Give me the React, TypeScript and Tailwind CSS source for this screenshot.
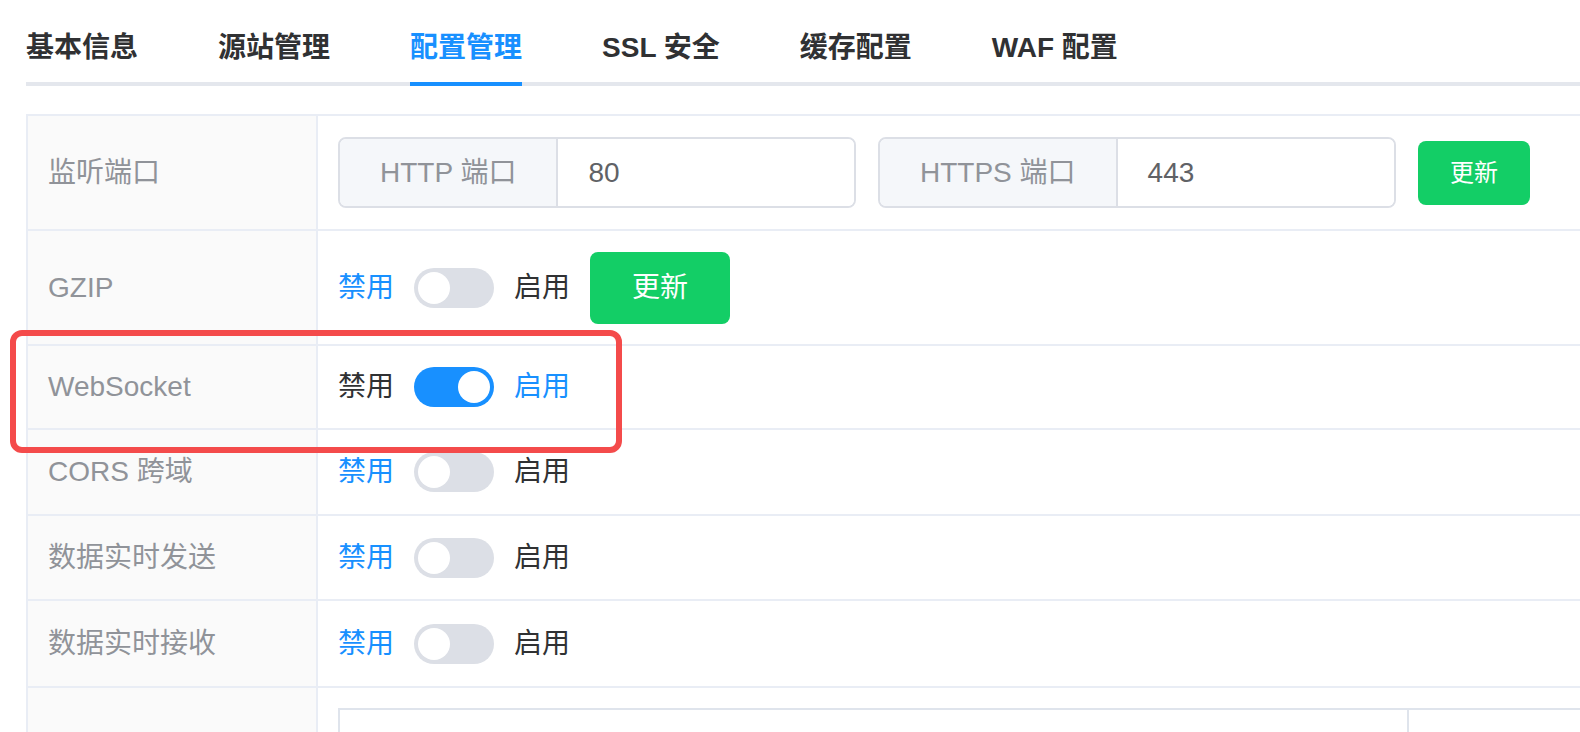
import React from "react";

const FONT = { fontFamily: '"Liberation Sans", "Noto Sans CJK SC", sans-serif' };

function Switch({ on }: { on: boolean }) {
  return (
    <div
      className={`relative h-[40px] w-[80px] shrink-0 rounded-full ${on ? "bg-[#1890ff]" : "bg-[#dcdfe6]"}`}
    >
      <div
        className={`absolute top-[4px] h-[32px] w-[32px] rounded-full bg-white ${on ? "left-[44px]" : "left-[4px]"}`}
      />
    </div>
  );
}

function Toggle({ on }: { on: boolean }) {
  return (
    <div className="flex items-center gap-[20px] text-[28px] leading-[40px]">
      <span className={on ? "text-[#303133]" : "text-[#1890ff]"}>禁用</span>
      <Switch on={on} />
      <span className={on ? "text-[#1890ff]" : "text-[#303133]"}>启用</span>
    </div>
  );
}

function Row({
  label,
  h,
  children,
}: {
  label: string;
  h: string;
  children?: React.ReactNode;
}) {
  return (
    <div className={`flex border-b-2 border-[#e9edf5] ${h}`}>
      <div className="flex w-[290px] shrink-0 items-center border-r-2 border-[#e9edf5] bg-[#fafafa] pl-[20px] text-[28px] text-[#909399]">
        {label}
      </div>
      <div className="flex flex-1 items-center pl-[20px]">{children}</div>
    </div>
  );
}

function InputGroup({ prepend, value }: { prepend: string; value: string }) {
  return (
    <div className="flex h-[71px] w-[518px] shrink-0 overflow-hidden rounded-[8px] border-2 border-[#dcdfe6]">
      <div className="flex items-center border-r-2 border-[#dcdfe6] bg-[#f5f7fa] px-[40px] text-[28px] text-[#909399]">
        {prepend}
      </div>
      <div className="flex flex-1 items-center bg-white pl-[30px] text-[28px] text-[#606266]">{value}</div>
    </div>
  );
}

export default function App() {
  const tabs = ["基本信息", "源站管理", "配置管理", "SSL 安全", "缓存配置", "WAF 配置"];
  return (
    <div className="relative h-[732px] w-[1580px] overflow-hidden bg-white" style={FONT}>
      {/* Tabs */}
      <div className="ml-[26px] flex pt-[2px] shadow-[inset_0_-4px_0_#e4e7ed]">
        {tabs.map((t, i) => (
          <div
            key={t}
            className={`flex h-[84px] items-center pt-[8px] ${i === 0 ? "pr-[40px]" : "px-[40px]"}`}
          >
            <div
              className={`flex h-full items-center border-b-4 text-[28px] font-semibold ${
                i === 2 ? "border-[#1890ff] text-[#1890ff]" : "border-transparent text-[#303133]"
              }`}
            >
              <span className="pt-[4px]">{t}</span>
            </div>
          </div>
        ))}
      </div>

      {/* Table */}
      <div className="ml-[26px] mt-[28px] w-[1600px] border-l-2 border-t-2 border-[#e9edf5]">
        <Row label="监听端口" h="h-[115px]">
          <div className="flex items-center gap-[22px]">
            <InputGroup prepend="HTTP 端口" value="80" />
            <InputGroup prepend="HTTPS 端口" value="443" />
            <button className="flex h-[64px] w-[112px] items-center justify-center rounded-[8px] bg-[#13ce66] text-[24px] text-white">
              更新
            </button>
          </div>
        </Row>
        <Row label="GZIP" h="h-[115px]">
          <div className="flex items-center gap-[20px]">
            <Toggle on={false} />
            <button className="flex h-[72px] w-[140px] items-center justify-center rounded-[8px] bg-[#13ce66] text-[28px] text-white">
              更新
            </button>
          </div>
        </Row>
        <Row label="WebSocket" h="h-[84px]">
          <Toggle on={true} />
        </Row>
        <Row label="CORS 跨域" h="h-[86px]">
          <Toggle on={false} />
        </Row>
        <Row label="数据实时发送" h="h-[85px]">
          <Toggle on={false} />
        </Row>
        <Row label="数据实时接收" h="h-[87px]">
          <Toggle on={false} />
        </Row>
        <div className="flex h-[200px]">
          <div className="w-[290px] shrink-0 border-r-2 border-[#e9edf5] bg-[#fafafa]" />
          <div className="flex-1 pl-[20px] pt-[20px]">
            <div className="flex h-[200px] border-l-2 border-t-2 border-[#dfe4ec]">
              <div className="w-[1069px] border-r-2 border-[#dfe4ec]" />
              <div className="flex-1" />
            </div>
          </div>
        </div>
      </div>

      {/* Highlight box */}
      <div className="pointer-events-none absolute left-[10px] top-[330px] h-[123px] w-[612px] rounded-[12px] border-[6px] border-[#f44b4b]" />
    </div>
  );
}
